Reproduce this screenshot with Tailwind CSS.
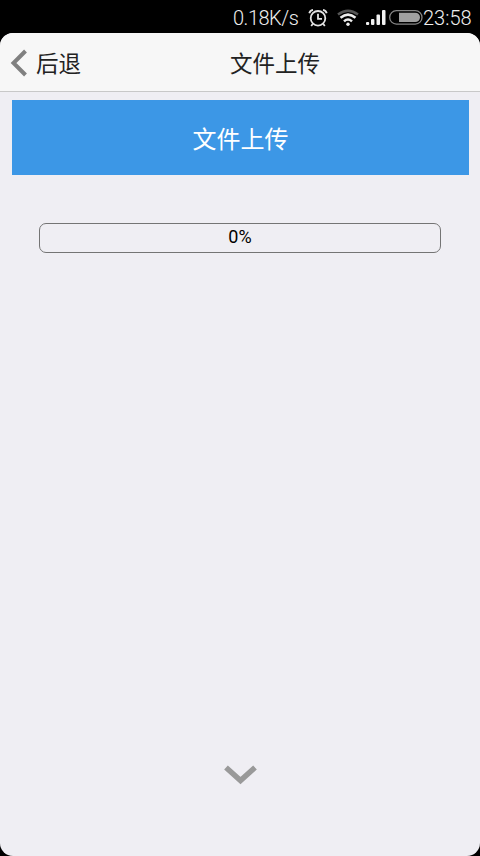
<!DOCTYPE html>
<html lang="zh-CN">
<head>
<meta charset="utf-8">
<title>文件上传</title>
<script src="https://cdn.jsdelivr.net/npm/@tailwindcss/browser@4"></script>
</head>
<body class="w-[480px] h-[856px] overflow-hidden bg-black flex flex-col font-[Roboto,'Noto_Sans_CJK_SC',sans-serif] text-[#222]">
  <div class="h-[33px] shrink-0 flex items-center justify-end pt-[3px] pr-[7px] text-[20px] leading-[30px] font-light text-[#eee]">
    <span class="w-[66px] whitespace-nowrap tracking-[-0.5px]">0.18K/s</span>
    <svg class="ml-[9px] w-5 h-5" viewBox="0 0 20 20" fill="none" stroke="#e4e4e4" stroke-width="1.8">
      <circle cx="10" cy="10.3" r="7.3"/>
      <path d="M10 5.8v5h4M1.3 5.2Q2 2.4 5 1.8M18.7 5.2Q18 2.4 15 1.8M4.7 16l-1.5 2M15.3 16l1.5 2"/>
    </svg>
    <svg class="ml-[9px] w-[22px] h-5" viewBox="0 0 22 20" fill="none" stroke-width="2.5">
      <path d="M1 6.6Q11 -1 21 6.6" stroke="#555"/>
      <path d="M3.5 9.8Q11 3.4 18.5 9.8M7 13.3Q11 9.6 15 13.3" stroke="#eee"/>
      <circle cx="11" cy="16.2" r="1.7" fill="#eee"/>
    </svg>
    <svg class="ml-[7px] w-5 h-5" viewBox="0 0 20 20" fill="#f2f2f2">
      <rect x="0" y="14" width="3.2" height="3" rx="1"/>
      <rect x="5" y="11" width="3.4" height="6" rx="1"/>
      <rect x="10.5" y="6.5" width="3.5" height="10.5" rx="1"/>
      <rect x="16" y="2" width="3.5" height="15" rx="1"/>
    </svg>
    <svg class="ml-[3px] w-[34px] h-5" viewBox="0 0 34 20">
      <rect x=".7" y="2.7" width="32.3" height="13.4" rx="6.7" fill="none" stroke="#858585" stroke-width="1.3"/>
      <path d="M10 4.7H26.3a4.7 4.7 0 0 1 0 9.4H10z" fill="#a0a0a0"/>
    </svg>
    <span class="w-[50px] whitespace-nowrap">23:58</span>
  </div>
  <main class="flex-1 flex flex-col rounded-[13px] overflow-hidden bg-[#efeef3]">
    <header class="h-[59px] shrink-0 grid grid-cols-[150px_1fr_80px] items-center bg-[#f7f7f7] border-b border-[#c8c8c8]">
      <div class="flex items-center pl-[10px] pt-[2px]">
        <svg class="w-[18px] h-7" viewBox="0 0 18 28" fill="none" stroke="#808080" stroke-width="4"><path d="M15.5 2L3.5 14l12 12"/></svg>
        <span class="ml-[8px] pt-[2px] text-[22.5px] leading-8">后退</span>
      </div>
      <h1 class="pt-[4px] text-center text-[22.5px] leading-8">文件上传</h1>
    </header>
    <button class="mt-[8px] ml-[12px] w-[457px] h-[75px] shrink-0 pt-[4px] bg-[#3c97e6] text-white text-[24px] leading-8">文件上传</button>
    <div class="mt-[48px] ml-[39px] w-[402px] h-[30px] shrink-0 rounded-[7px] border border-[#747474] text-center text-[18px] leading-[26px] text-black">0%</div>
    <div class="mt-auto mb-[70px] flex justify-center">
      <svg class="w-[34px] h-[21px]" viewBox="0 0 34 21" fill="none" stroke="#999" stroke-width="5.5"><path d="M3 2.5L17.5 15.5l14.5-13"/></svg>
    </div>
  </main>
</body>
</html>
